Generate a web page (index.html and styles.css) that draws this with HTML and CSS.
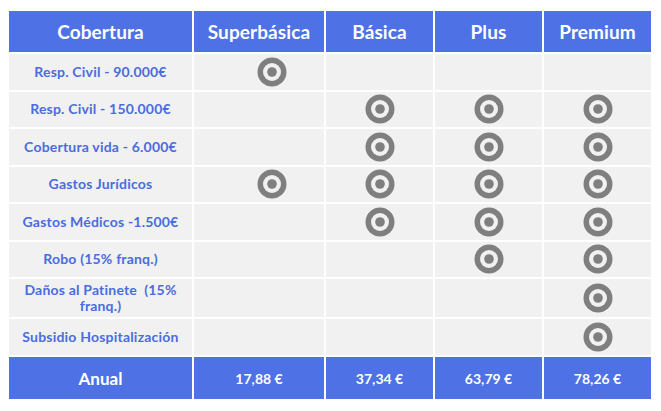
FILE: index.html
```html
<!DOCTYPE html>
<html lang="es">
<head>
<meta charset="utf-8">
<title>Coberturas</title>
<link rel="stylesheet" href="styles.css">
</head>
<body>
<svg width="0" height="0" class="defs">
  <symbol id="dot" viewBox="0 0 30 30">
    <circle cx="15" cy="15" r="14.5" fill="#7f7f7f"/>
    <circle cx="15" cy="15" r="9" fill="#f1f1f1"/>
    <circle cx="15" cy="15" r="4.8" fill="#7f7f7f"/>
  </symbol>
</svg>
<div class="table">
  <div class="cell head">Cobertura</div>
  <div class="cell head">Superbásica</div>
  <div class="cell head">Básica</div>
  <div class="cell head">Plus</div>
  <div class="cell head">Premium</div>

  <div class="cell label">Resp. Civil - 90.000€</div>
  <div class="cell sb"><svg class="ico"><use href="#dot"/></svg></div>
  <div class="cell"></div>
  <div class="cell"></div>
  <div class="cell"></div>

  <div class="cell label">Resp. Civil - 150.000€</div>
  <div class="cell sb"></div>
  <div class="cell"><svg class="ico"><use href="#dot"/></svg></div>
  <div class="cell"><svg class="ico"><use href="#dot"/></svg></div>
  <div class="cell"><svg class="ico"><use href="#dot"/></svg></div>

  <div class="cell label">Cobertura vida - 6.000€</div>
  <div class="cell sb"></div>
  <div class="cell"><svg class="ico"><use href="#dot"/></svg></div>
  <div class="cell"><svg class="ico"><use href="#dot"/></svg></div>
  <div class="cell"><svg class="ico"><use href="#dot"/></svg></div>

  <div class="cell label">Gastos Jurídicos</div>
  <div class="cell sb"><svg class="ico"><use href="#dot"/></svg></div>
  <div class="cell"><svg class="ico"><use href="#dot"/></svg></div>
  <div class="cell"><svg class="ico"><use href="#dot"/></svg></div>
  <div class="cell"><svg class="ico"><use href="#dot"/></svg></div>

  <div class="cell label">Gastos Médicos -1.500€</div>
  <div class="cell sb"></div>
  <div class="cell"><svg class="ico"><use href="#dot"/></svg></div>
  <div class="cell"><svg class="ico"><use href="#dot"/></svg></div>
  <div class="cell"><svg class="ico"><use href="#dot"/></svg></div>

  <div class="cell label">Robo (15% franq.)</div>
  <div class="cell sb"></div>
  <div class="cell"></div>
  <div class="cell"><svg class="ico"><use href="#dot"/></svg></div>
  <div class="cell"><svg class="ico"><use href="#dot"/></svg></div>

  <div class="cell label">Daños al Patinete &nbsp;(15% franq.)</div>
  <div class="cell sb"></div>
  <div class="cell"></div>
  <div class="cell"></div>
  <div class="cell"><svg class="ico"><use href="#dot"/></svg></div>

  <div class="cell label">Subsidio Hospitalización</div>
  <div class="cell sb"></div>
  <div class="cell"></div>
  <div class="cell"></div>
  <div class="cell"><svg class="ico"><use href="#dot"/></svg></div>

  <div class="cell foot total">Anual</div>
  <div class="cell foot">17,88 €</div>
  <div class="cell foot">37,34 €</div>
  <div class="cell foot">63,79 €</div>
  <div class="cell foot">78,26 €</div>
</div>
</body>
</html>
```
FILE: styles.css
```css
html, body {
  margin: 0;
  background: #ffffff;
}
body {
  padding: 11px 10px 0 9px;
  font-family: "Lato", "Open Sans", sans-serif;
  font-weight: 700;
}
.defs {
  position: absolute;
  width: 0;
  height: 0;
}
.table {
  display: grid;
  grid-template-columns: 183px 130px 107px 107px 107px;
  grid-template-rows: 41px repeat(6, 35.5px) 38px 36px 42px;
  gap: 2px;
  width: 642px;
}
.cell {
  background: #f1f1f1;
  display: flex;
  align-items: center;
  justify-content: center;
  text-align: center;
}
.head {
  background: #4e71e6;
  color: #ffffff;
  font-size: 19px;
  letter-spacing: 0.1px;
}
.label {
  color: #4a6ce0;
  font-size: 14px;
  letter-spacing: 0.2px;
  line-height: 16px;
  padding: 0 11px;
}
.sb {
  padding-left: 25px;
}
.ico {
  width: 30px;
  height: 30px;
  display: block;
}
.foot {
  background: #4e71e6;
  color: #ffffff;
  font-size: 14px;
}
.foot.total {
  font-size: 17px;
}
```
